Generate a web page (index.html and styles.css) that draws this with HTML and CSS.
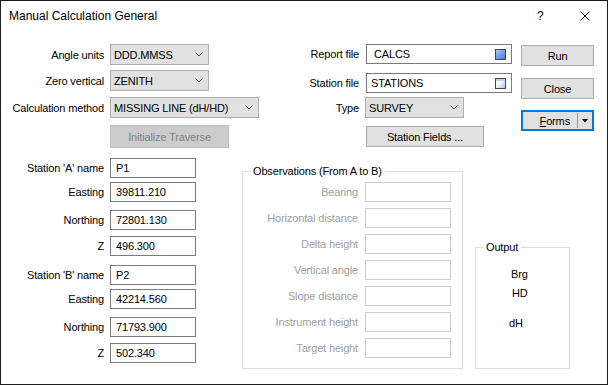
FILE: index.html
```html
<!DOCTYPE html>
<html>
<head>
<meta charset="utf-8">
<link rel="stylesheet" href="styles.css">
</head>
<body>
<div class="dialog">
  <div class="titlebar">
    <span class="title">Manual Calculation General</span>
    <span class="help">?</span>
    <span class="xbtn"><svg width="10" height="10" viewBox="0 0 10 10"><path d="M0.5 0.5 L9.5 9.5 M9.5 0.5 L0.5 9.5" stroke="#000" stroke-width="1" fill="none"/></svg></span>
  </div>

  <div class="top">
    <div class="form-left">
      <div class="row h21">
        <span class="lbl lw103">Angle units</span>
        <div class="combo w99"><span>DDD.MMSS</span><svg class="chev" width="8" height="5" viewBox="0 0 8 5"><polyline points="0.5,0.5 4,4 7.5,0.5" fill="none" stroke="#555" stroke-width="1"/></svg></div>
      </div>
      <div class="row h21 mt5">
        <span class="lbl lw103">Zero vertical</span>
        <div class="combo w99"><span>ZENITH</span><svg class="chev" width="8" height="5" viewBox="0 0 8 5"><polyline points="0.5,0.5 4,4 7.5,0.5" fill="none" stroke="#555" stroke-width="1"/></svg></div>
      </div>
      <div class="row h21 mt6">
        <span class="lbl lw103">Calculation method</span>
        <div class="combo w149"><span>MISSING LINE (dH/HD)</span><svg class="chev" width="8" height="5" viewBox="0 0 8 5"><polyline points="0.5,0.5 4,4 7.5,0.5" fill="none" stroke="#555" stroke-width="1"/></svg></div>
      </div>
      <div class="row h23 mt7">
        <span class="lbl lw103"></span>
        <div class="btn disabled w119">Initialize Traverse</div>
      </div>
    </div>

    <div class="form-mid">
      <div class="row h20">
        <span class="lbl lw59">Report file</span>
        <div class="input w146 pl7"><span>CALCS</span><span class="fileicon fill"></span></div>
      </div>
      <div class="row h20 mt9">
        <span class="lbl lw59">Station file</span>
        <div class="input w146 pl4"><span>STATIONS</span><span class="fileicon empty"></span></div>
      </div>
      <div class="row h21 mt4">
        <span class="lbl lw59">Type</span>
        <div class="combo w99 shiftl"><span>SURVEY</span><svg class="chev" width="8" height="5" viewBox="0 0 8 5"><polyline points="0.5,0.5 4,4 7.5,0.5" fill="none" stroke="#555" stroke-width="1"/></svg></div>
      </div>
      <div class="row h21 mt8">
        <span class="lbl lw59"></span>
        <div class="btn w118">Station Fields ...</div>
      </div>
    </div>

    <div class="buttons">
      <div class="btn w73 h21 mt1">Run</div>
      <div class="btn w73 h21 mt12">Close</div>
      <div class="btn forms w73 h21 mt11"><span><u>F</u>orms</span><span class="sep"></span><svg class="tri" width="6" height="4" viewBox="0 0 6 4"><polygon points="0,0 6,0 3,3.5" fill="#000"/></svg></div>
    </div>
  </div>

  <div class="bottom">
    <div class="stations">
      <div class="row h20"><span class="lbl lw103">Station 'A' name</span><div class="input w86 pl5">P1</div></div>
      <div class="row h20 mt4"><span class="lbl lw103">Easting</span><div class="input w86 pl5">39811.210</div></div>
      <div class="row h20 mt8"><span class="lbl lw103">Northing</span><div class="input w86 pl5">72801.130</div></div>
      <div class="row h20 mt6"><span class="lbl lw103">Z</span><div class="input w86 pl5">496.300</div></div>
      <div class="row h20 mt9"><span class="lbl lw103">Station 'B' name</span><div class="input w86 pl5">P2</div></div>
      <div class="row h20 mt4"><span class="lbl lw103">Easting</span><div class="input w86 pl5">42214.560</div></div>
      <div class="row h20 mt8"><span class="lbl lw103">Northing</span><div class="input w86 pl5">71793.900</div></div>
      <div class="row h20 mt6"><span class="lbl lw103">Z</span><div class="input w86 pl5">502.340</div></div>
    </div>

    <fieldset class="group obs">
      <legend>Observations (From A to B)</legend>
      <div class="obs-rows">
        <div class="row h20"><span class="lbl dis lw108">Bearing</span><div class="input dis w86"></div></div>
        <div class="row h20"><span class="lbl dis lw108">Horizontal distance</span><div class="input dis w86"></div></div>
        <div class="row h20"><span class="lbl dis lw108">Delta height</span><div class="input dis w86"></div></div>
        <div class="row h20"><span class="lbl dis lw108">Vertical angle</span><div class="input dis w86"></div></div>
        <div class="row h20"><span class="lbl dis lw108">Slope distance</span><div class="input dis w86"></div></div>
        <div class="row h20"><span class="lbl dis lw108">Instrument height</span><div class="input dis w86"></div></div>
        <div class="row h20"><span class="lbl dis lw108">Target height</span><div class="input dis w86"></div></div>
      </div>
    </fieldset>

    <fieldset class="group output">
      <legend>Output</legend>
      <div class="out brg">Brg</div>
      <div class="out hd">HD</div>
      <div class="out dh">dH</div>
    </fieldset>
  </div>
</div>
</body>
</html>
```

FILE: styles.css
```css
html, body {
  margin: 0;
  padding: 0;
  background: #ffffff;
}
body {
  font-family: "Liberation Sans", Arial, sans-serif;
  font-size: 11px;
  letter-spacing: -0.15px;
  color: #000;
}
.dialog {
  box-sizing: border-box;
  width: 608px;
  height: 385px;
  border: 1px solid #1e1e1e;
  background: #fff;
  overflow: hidden;
}
.titlebar {
  display: flex;
  align-items: center;
  height: 30px;
  padding-left: 8px;
}
.title {
  font-size: 12px;
  letter-spacing: 0;
  color: #000;
  flex: 1;
}
.help {
  font-size: 12px;
  letter-spacing: 0;
  width: 12px;
  margin-right: 31px;
}
.xbtn {
  display: flex;
  width: 10px;
  height: 10px;
  margin-right: 17px;
}
.top {
  display: flex;
  padding-top: 13px;
}
.form-left {
  width: 299px;
}
.form-mid {
  width: 213px;
  margin-right: 8px;
}
.buttons {
  display: flex;
  flex-direction: column;
}
.row {
  display: flex;
  align-items: center;
}
.h20 { height: 20px; }
.h21 { height: 21px; }
.h23 { height: 23px; }
.mt1 { margin-top: 1px; }
.mt4 { margin-top: 4px; }
.mt5 { margin-top: 5px; }
.mt6 { margin-top: 6px; }
.mt7 { margin-top: 7px; }
.mt8 { margin-top: 8px; }
.mt9 { margin-top: 9px; }
.mt11 { margin-top: 11px; }
.mt12 { margin-top: 12px; }
.lbl {
  text-align: right;
  white-space: nowrap;
  flex: none;
}
.lw103 { width: 103px; margin-right: 6px; }
.lw59 { width: 59px; margin-right: 7px; }
.lw108 { width: 108px; margin-right: 7px; }
.lbl.dis { color: #a0a0a0; }
.w73 { width: 73px; }
.w86 { width: 86px; }
.w99 { width: 99px; }
.w118 { width: 118px; }
.w119 { width: 119px; }
.w146 { width: 146px; }
.w149 { width: 149px; }
.combo {
  box-sizing: border-box;
  height: 100%;
  display: flex;
  align-items: center;
  justify-content: space-between;
  border: 1px solid #adadad;
  background: #e1e1e1;
  padding: 0 5px 0 3px;
  white-space: nowrap;
}
.combo.shiftl { margin-left: -1px; }
.chev { flex: none; }
.input {
  box-sizing: border-box;
  height: 100%;
  display: flex;
  align-items: center;
  border: 1px solid #7a7a7a;
  background: #fff;
  white-space: nowrap;
}
.input.dis { border-color: #cccccc; }
.pl4 { padding-left: 4px; }
.pl5 { padding-left: 5px; }
.pl7 { padding-left: 7px; }
.input.w146 {
  justify-content: space-between;
  padding-right: 5px;
}
.fileicon {
  box-sizing: border-box;
  width: 11px;
  height: 11px;
  border: 1px solid #3b4660;
  flex: none;
}
.fileicon.fill {
  background: linear-gradient(135deg, #b4ccf8 0%, #7aa0ec 45%, #4a78dc 100%);
}
.fileicon.empty {
  background:
    linear-gradient(#c4d2f0, #c4d2f0) top / 100% 2px no-repeat,
    linear-gradient(135deg, #ffffff 0%, #f2f5fc 45%, #b0c4ee 100%);
}
.btn {
  box-sizing: border-box;
  height: 100%;
  display: flex;
  align-items: center;
  justify-content: center;
  border: 1px solid #adadad;
  background: #e1e1e1;
  white-space: nowrap;
}
.btn.h21 { height: 21px; }
.btn.disabled {
  background: #cccccc;
  border-color: #bfbfbf;
  color: #838383;
}
.btn.forms {
  border: 2px solid #0078d7;
  justify-content: flex-end;
  padding-right: 4px;
}
.sep {
  width: 1px;
  height: 15px;
  background: #9a9a9a;
  margin-left: 7px;
  margin-right: 4px;
}
.tri { flex: none; }
.bottom {
  display: flex;
  align-items: flex-start;
  margin-top: 10px;
}
.stations {
  width: 195px;
  flex: none;
}
.group {
  box-sizing: border-box;
  margin: 0;
  border: 1px solid #dcdcdc;
  padding: 0 10px 10px 7px;
  min-width: 0;
}
.group legend {
  padding: 0 3px;
  line-height: 13px;
  font-size: 11px;
  color: #000;
}
.obs {
  width: 221px;
  margin-left: 46px;
  margin-top: 7px;
  flex: none;
}
.obs-rows {
  display: flex;
  flex-direction: column;
  gap: 6px;
  padding-top: 4px;
}
.output {
  width: 95px;
  margin-left: 12px;
  margin-top: 83px;
  align-self: stretch;
  flex: none;
}
.out {
  line-height: 13px;
}
.brg { margin-top: 14px; padding-left: 28px; }
.hd { margin-top: 6px; padding-left: 29px; }
.dh { margin-top: 17px; padding-left: 26px; }
```
